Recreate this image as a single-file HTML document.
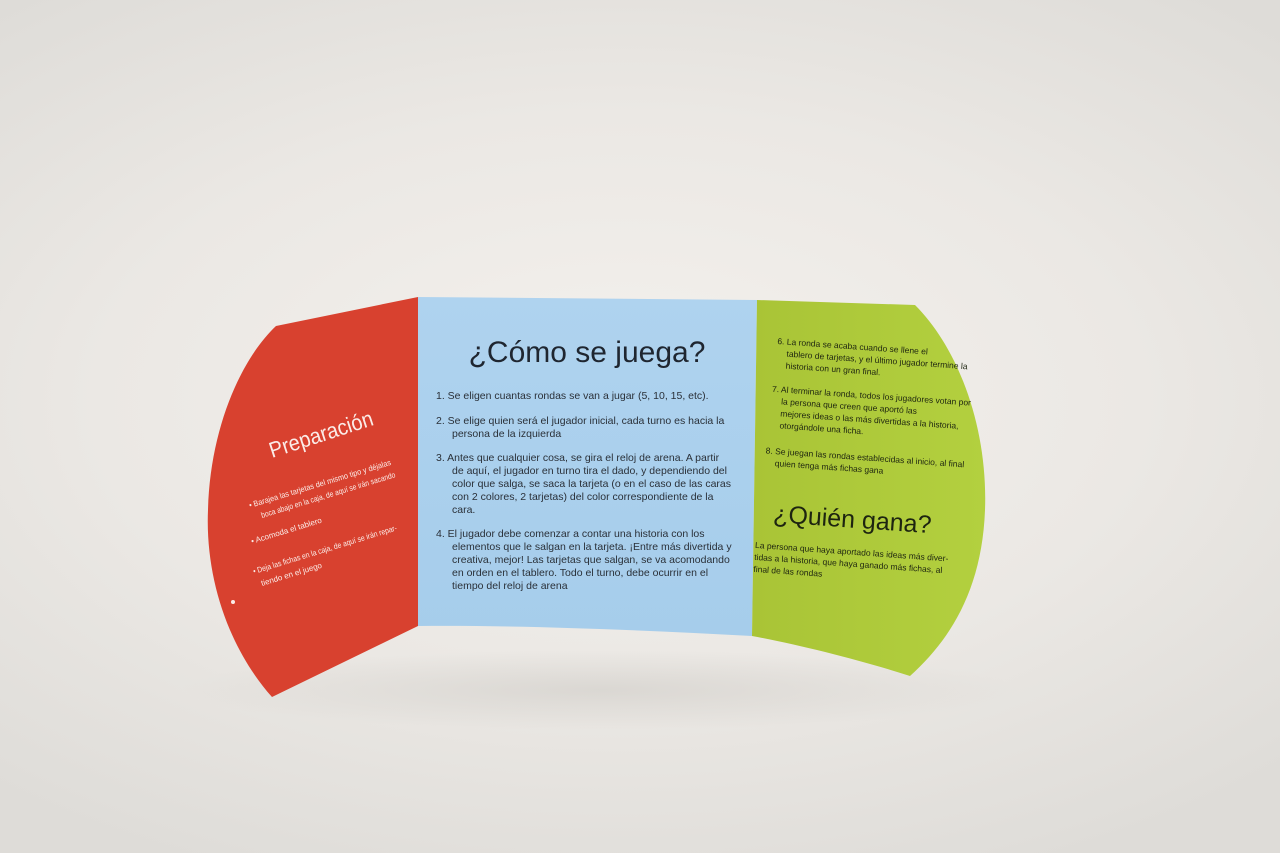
<!DOCTYPE html>
<html><head><meta charset="utf-8"><style>
html,body{margin:0;padding:0;width:1280px;height:853px;overflow:hidden}
body{background:radial-gradient(ellipse 950px 520px at 620px 400px,#f4f1ed 0%,#ebe8e4 55%,#dedcd8 100%);font-family:"Liberation Sans",sans-serif}
svg{position:absolute;left:0;top:0}
</style></head><body>
<svg width="1280" height="853" viewBox="0 0 1280 853">
<defs>
<radialGradient id="sh" cx="0.5" cy="0.5" r="0.5"><stop offset="0" stop-color="#cfccc7" stop-opacity="0.6"/><stop offset="1" stop-color="#cfccc7" stop-opacity="0"/></radialGradient>
<linearGradient id="bl" x1="0" y1="0" x2="0" y2="1"><stop offset="0" stop-color="#afd3ef"/><stop offset="1" stop-color="#a6cdeb"/></linearGradient>
<linearGradient id="gr" x1="0" y1="0" x2="1" y2="0"><stop offset="0" stop-color="#a9c436"/><stop offset="1" stop-color="#b3d03f"/></linearGradient>
</defs>
<ellipse cx="600" cy="690" rx="420" ry="40" fill="url(#sh)"/>
<path d="M276 326 L418 297 L418 626 L272 697 C230 650 205 580 208 510 C210 430 240 360 276 326 Z" fill="#d8412f"/>
<path d="M418 297 L757 300 L752 636 C640 630 520 625 418 626 Z" fill="url(#bl)"/>
<path d="M757 300 L915 305 C960 350 988 430 985 510 C982 590 950 640 910 676 C860 660 800 645 752 636 Z" fill="url(#gr)"/>
<g fill="#fbece8">
<text x="272" y="458" font-size="22" transform="rotate(-18 272 458)" textLength="108" lengthAdjust="spacingAndGlyphs">Preparación</text>
<g font-size="8">
<text x="250" y="508" transform="rotate(-17 250 508)" textLength="148" lengthAdjust="spacingAndGlyphs">•  Barajea las tarjetas del mismo tipo y déjalas</text>
<text x="262" y="518" transform="rotate(-17 262 518)" textLength="140" lengthAdjust="spacingAndGlyphs">boca abajo en la caja, de aquí se irán sacando</text>
<text x="252" y="544" transform="rotate(-17 252 544)">•  Acomoda el tablero</text>
<text x="254" y="574" transform="rotate(-17 254 574)" textLength="150" lengthAdjust="spacingAndGlyphs">•  Deja las fichas en la caja, de aquí se irán repar-</text>
<text x="262" y="586" transform="rotate(-17 262 586)">tiendo en el juego</text>
</g>
<circle cx="233" cy="602" r="2"/>
</g>
<g fill="#1f2630">
<text x="587" y="362" font-size="30" text-anchor="middle">¿Cómo se juega?</text>
<g font-size="10.5" fill="#2a3038">
<text x="436" y="399">1.   Se eligen cuantas rondas se van a jugar (5, 10, 15, etc).</text>
<text x="436" y="424">2.   Se elige quien será el jugador inicial, cada turno es hacia la</text>
<text x="452" y="437">persona de la izquierda</text>
<text x="436" y="461">3.   Antes que cualquier cosa, se gira el reloj de arena. A partir</text>
<text x="452" y="474">de aquí, el jugador en turno tira el dado, y dependiendo del</text>
<text x="452" y="487">color que salga, se saca la tarjeta (o en el caso de las caras</text>
<text x="452" y="500">con 2 colores, 2 tarjetas) del color correspondiente de la</text>
<text x="452" y="513">cara.</text>
<text x="436" y="537">4.   El jugador debe comenzar a contar una historia con los</text>
<text x="452" y="550">elementos que le salgan en la tarjeta. ¡Entre más divertida y</text>
<text x="452" y="563">creativa, mejor! Las tarjetas que salgan, se va acomodando</text>
<text x="452" y="576">en orden en el tablero. Todo el turno, debe ocurrir en el</text>
<text x="452" y="589">tiempo del reloj de arena</text>
</g>
</g>
<g fill="#1d2410" transform="rotate(4 860 450)">
<g font-size="8.5">
<text x="770" y="350">6.  La ronda se acaba cuando se llene el</text>
<text x="780" y="362">tablero de tarjetas, y el último jugador termine la</text>
<text x="780" y="374">historia con un gran final.</text>
<text x="768" y="398">7.  Al terminar la ronda, todos los jugadores votan por</text>
<text x="778" y="410">la persona que creen que aportó las</text>
<text x="778" y="422">mejores ideas o las más divertidas a la historia,</text>
<text x="778" y="434">otorgándole una ficha.</text>
<text x="766" y="460">8.  Se juegan las rondas establecidas al inicio, al final</text>
<text x="776" y="472">quien tenga más fichas gana</text>
</g>
<text x="778" y="528" font-size="25">¿Quién gana?</text>
<g font-size="8.5">
<text x="762" y="555">La persona que haya aportado las ideas más diver-</text>
<text x="762" y="567">tidas a la historia, que  haya ganado más fichas, al</text>
<text x="762" y="579">final de las rondas</text>
</g>
</g>
</svg>
</body></html>
